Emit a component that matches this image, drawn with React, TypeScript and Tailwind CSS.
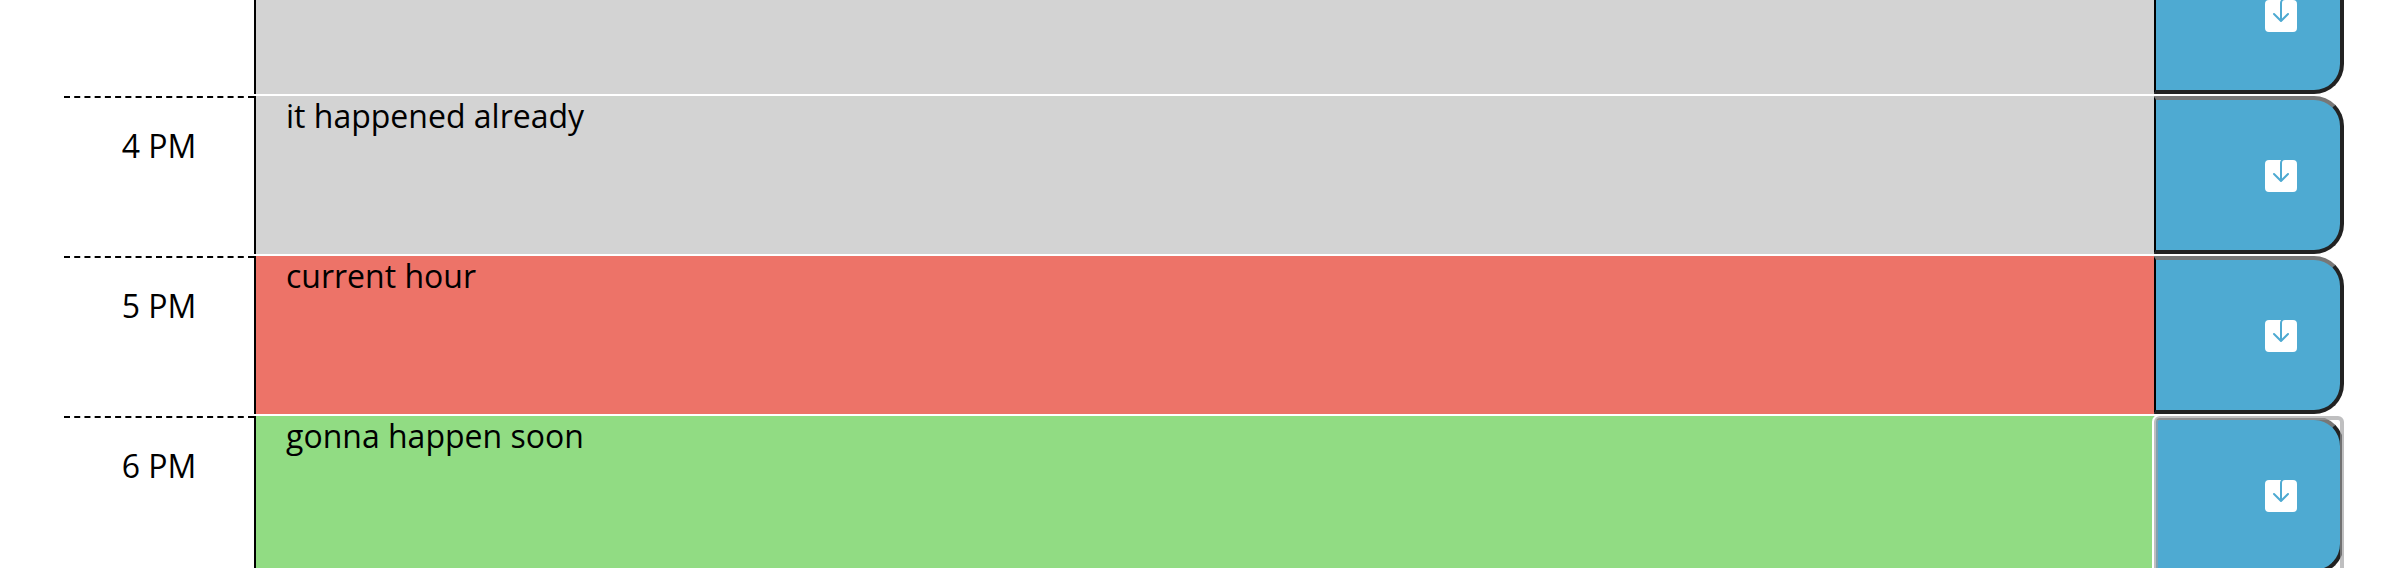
import { useState } from "react";
import { BsSaveFill } from "react-icons/bs";

type Tense = "past" | "present" | "future";

type Block = {
  id: string;
  hour: string;
  note: string;
  tense: Tense;
  active?: boolean;
};

const blocks: Block[] = [
  { id: "slot-15", hour: "", note: "", tense: "past" },
  { id: "slot-16", hour: "4 PM", note: "it happened already", tense: "past" },
  { id: "slot-17", hour: "5 PM", note: "current hour", tense: "present" },
  { id: "slot-18", hour: "6 PM", note: "gonna happen soon", tense: "future", active: true },
];

const tenseClass: Record<Tense, string> = {
  past: "bg-[#d3d3d3]",
  present: "bg-[#ed7368]",
  future: "bg-[#91dc83]",
};

function SaveButton({ active }: { active?: boolean }) {
  return (
    <button
      type="button"
      aria-label="Save"
      className="relative flex h-full w-1/12 shrink-0 items-center justify-end rounded-r-[30px] border-4 border-l-2 border-t-[#777777] border-r-[#222222] border-b-[#222222] border-l-black bg-[#4eaad2] pt-0.5 pr-[43px] text-[32px] text-white"
    >
      <BsSaveFill aria-hidden="true" />
      {active && (
        <>
          <span className="absolute -top-[6px] -right-[6px] -bottom-[6px] -left-1 rounded-lg border-4 border-white" />
          <span className="absolute -top-1 -right-1 -bottom-1 -left-0.5 rounded-md border-4 border-[#9c9c9e]/65" />
        </>
      )}
    </button>
  );
}

function TimeBlock({ block }: { block: Block }) {
  const [note, setNote] = useState(block.note);
  return (
    <div className="flex h-[158px]">
      <label
        htmlFor={block.id}
        className="w-1/12 shrink-0 border-t-2 border-dashed border-black pt-6 text-center"
      >
        {block.hour}
      </label>
      <textarea
        id={block.id}
        value={note}
        onChange={(e) => setNote(e.target.value)}
        className={`min-w-0 flex-1 resize-none overflow-hidden border-l-2 border-black pt-0.5 pr-6 pl-[30px] leading-9 outline-none ${tenseClass[block.tense]}`}
      />
      <SaveButton active={block.active} />
    </div>
  );
}

export default function App() {
  return (
    <main className="h-screen overflow-hidden bg-white pr-[58px] pl-16 font-['Open_Sans',sans-serif] text-[32px] leading-12 text-black">
      <div className="-mt-16 flex flex-col gap-0.5">
        {blocks.map((block) => (
          <TimeBlock key={block.id} block={block} />
        ))}
      </div>
    </main>
  );
}
